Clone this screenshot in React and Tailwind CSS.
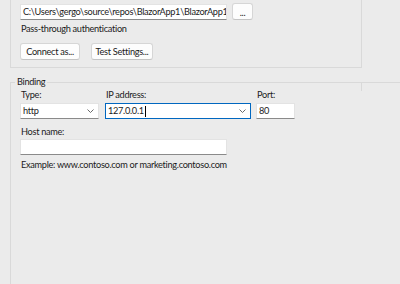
const font = { fontFamily: 'Lato, "Noto Sans", sans-serif' }

function Chevron() {
  return (
    <svg className="w-[7px] h-[4px] shrink-0" viewBox="0 0 7 4" fill="none" stroke="#6b6b6b" strokeWidth="1">
      <path d="M0.5 0.5L3.5 3.5L6.5 0.5" />
    </svg>
  )
}

function Field({ className = '', children }) {
  return (
    <div className={`bg-white border border-[#e3e3e3] border-b-[#8a8a8a] flex items-center pl-[2px] text-[#1b1b1b] whitespace-nowrap overflow-hidden ${className}`}>
      {children}
    </div>
  )
}

function Button({ className = '', children }) {
  return (
    <div className={`bg-[#fdfdfd] border border-[#d6d6d6] border-b-[#c4c4c4] rounded-[3px] flex items-center justify-center text-[#1b1b1b] whitespace-nowrap ${className}`}>
      {children}
    </div>
  )
}

export default function App() {
  return (
    <div className="w-[400px] h-[284px] bg-[#ebebeb] overflow-hidden text-[9.2px] tracking-[-0.3px] text-[#1b1b1b] leading-[14px]" style={font}>
      {/* Physical path group (top cut off) */}
      <div className="ml-[10px] w-[352px] h-[68px] border-l border-r border-b border-[#d9d9d9] pl-[9px] pt-[3px]">
        <div className="flex items-center gap-[5px]">
          <Field className="w-[207px] h-[16px]">C:\Users\gergo\source\repos\BlazorApp1\BlazorApp1\b</Field>
          <Button className="w-[21px] h-[17px] pt-[2px]">...</Button>
        </div>
        <div className="mt-[1px] leading-[16px] pl-[1px]">Pass-through authentication</div>
        <div className="flex gap-[11px] mt-[6px]">
          <Button className="w-[60px] h-[17px]">Connect as...</Button>
          <Button className="w-[62px] h-[17px]">Test Settings...</Button>
        </div>
      </div>

      {/* Binding group */}
      <div className="relative mt-[14px] ml-[10px] h-[220px] border-l border-t border-[#d9d9d9] pl-[9px] pt-[5px]">
        <div className="absolute -top-[8px] left-[4px] px-[2px] bg-[#ebebeb] leading-[14px]">Binding</div>
        <div className="absolute -top-[1px] left-[350px] w-[1px] h-[9px] bg-[#d9d9d9]" />
        <div className="flex gap-[6px]">
          <div className="w-[79px]">
            <div className="pl-[1px]">Type:</div>
            <Field className="mt-[1px] h-[16px] justify-between pr-[4px]">
              <span>http</span>
              <Chevron />
            </Field>
          </div>
          <div className="w-[146px]">
            <div className="pl-[1px]">IP address:</div>
            <div className="mt-[1px] h-[16px] bg-white border border-[#0067c0] flex items-center justify-between pl-[2px] pr-[4px]">
              <span className="flex items-center">127.0.0.1<span className="w-[1px] h-[11px] bg-black ml-[1px]" /></span>
              <Chevron />
            </div>
          </div>
          <div className="w-[39px] -ml-[1px]">
            <div className="pl-[1px]">Port:</div>
            <Field className="mt-[1px] h-[16px]">80</Field>
          </div>
        </div>
        <div className="mt-[6px] pl-[1px]">Host name:</div>
        <Field className="w-[207px] h-[16px]" />
        <div className="mt-[3px] pl-[1px]">Example: www.contoso.com or marketing.contoso.com</div>
      </div>
    </div>
  )
}
